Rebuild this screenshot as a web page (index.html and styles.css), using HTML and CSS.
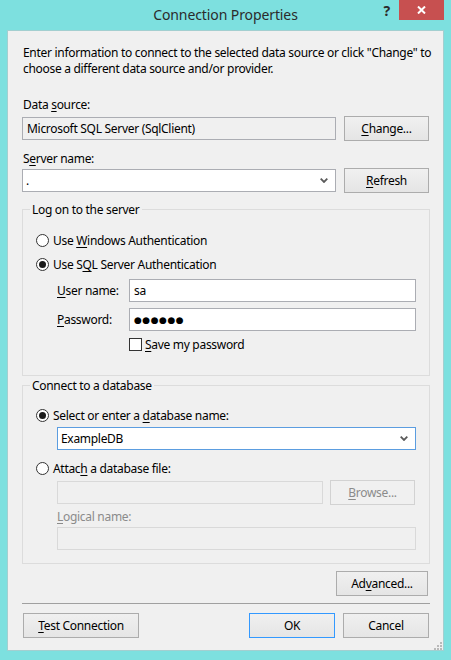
FILE: index.html
```html
<!DOCTYPE html>
<html>
<head>
<meta charset="utf-8">
<title>Connection Properties</title>
<link rel="stylesheet" href="styles.css">
</head>
<body>
<div class="window">
  <div class="titlebar">
    <div class="title">Connection Properties</div>
    <div class="controls">
      <span class="help">?</span>
      <span class="close"><svg width="9" height="8" viewBox="0 0 9 8"><path d="M1 0.5 L8 7.5 M8 0.5 L1 7.5" stroke="#fff" stroke-width="2" fill="none"/></svg></span>
    </div>
  </div>
  <div class="client">
    <p class="intro">Enter information to connect to the selected data source or click "Change" to<br>choose a different data source and/or provider.</p>

    <div class="label first">Data <u>s</u>ource:</div>
    <div class="row">
      <div class="field readonly">Microsoft SQL Server (SqlClient)</div>
      <button class="btn"><u>C</u>hange...</button>
    </div>

    <div class="label">S<u>e</u>rver name:</div>
    <div class="row row2">
      <div class="field combo"><span>.</span><svg class="chev" width="8" height="5" viewBox="0 0 8 5"><path d="M0.7 0.7 L4 4 L7.3 0.7" stroke="#5a5a5a" stroke-width="1.8" fill="none"/></svg></div>
      <button class="btn"><u>R</u>efresh</button>
    </div>

    <fieldset class="group group1">
      <legend>Log on to the server</legend>
      <div class="radio-row r1"><span class="radio"></span><span>Use <u>W</u>indows Authentication</span></div>
      <div class="radio-row r2"><span class="radio on"></span><span>Use S<u>Q</u>L Server Authentication</span></div>
      <div class="cred">
        <div class="clabel"><u>U</u>ser name:</div>
        <div class="field">sa</div>
        <div class="clabel"><u>P</u>assword:</div>
        <div class="field pw">●●●●●●</div>
        <div class="check-row"><span class="check"></span><span><u>S</u>ave my password</span></div>
      </div>
    </fieldset>

    <fieldset class="group group2">
      <legend>Connect to a database</legend>
      <div class="radio-row r3"><span class="radio on"></span><span>Select or enter a <u>d</u>atabase name:</span></div>
      <div class="field combo focus db"><span>ExampleDB</span><svg class="chev" width="8" height="5" viewBox="0 0 8 5"><path d="M0.7 0.7 L4 4 L7.3 0.7" stroke="#5a5a5a" stroke-width="1.8" fill="none"/></svg></div>
      <div class="radio-row r4"><span class="radio"></span><span>Attac<u>h</u> a database file:</span></div>
      <div class="attach">
        <div class="field disabled"></div>
        <button class="btn disabled-btn"><u>B</u>rowse...</button>
      </div>
      <div class="dlabel"><u>L</u>ogical name:</div>
      <div class="field disabled logical"></div>
    </fieldset>

    <div class="adv-row"><button class="btn adv">Ad<u>v</u>anced...</button></div>
    <div class="sep"></div>
    <div class="bottom">
      <button class="btn test"><u>T</u>est Connection</button>
      <div class="okcancel">
        <button class="btn ok">OK</button>
        <button class="btn">Cancel</button>
      </div>
    </div>
    <div class="grip-row">
      <svg width="8" height="8" viewBox="0 0 8 8" fill="#b9b9b9"><rect x="6" y="0" width="2" height="2"/><rect x="3" y="3" width="2" height="2"/><rect x="6" y="3" width="2" height="2"/><rect x="0" y="6" width="2" height="2"/><rect x="3" y="6" width="2" height="2"/><rect x="6" y="6" width="2" height="2"/></svg>
    </div>
  </div>
</div>
</body>
</html>
```
FILE: styles.css
```css
* { box-sizing: border-box; }
html, body { margin: 0; padding: 0; }
body {
  width: 451px;
  height: 660px;
  overflow: hidden;
  font-family: "Noto Sans", "DejaVu Sans", sans-serif;
  font-size: 12px;
  letter-spacing: -0.3px;
  color: #000;
}
u { text-decoration-thickness: 1px; text-underline-offset: 2px; }

.window {
  width: 451px;
  height: 660px;
  background: #7de0df;
}
.titlebar {
  display: grid;
  height: 30px;
}
.title, .controls { grid-area: 1 / 1; }
.title {
  text-align: center;
  font-size: 14px;
  letter-spacing: -0.1px;
  line-height: 30px;
  color: #2b2b2b;
}
.controls {
  justify-self: end;
  align-self: start;
  display: flex;
  align-items: flex-start;
  margin-right: 7px;
}
.help {
  font-weight: bold;
  font-size: 14px;
  line-height: 20px;
  color: #2b2b2b;
  margin-right: 9px;
  margin-top: 1px;
}
.close {
  width: 45px;
  height: 20px;
  background: #c75050;
  display: flex;
  align-items: center;
  justify-content: center;
}

.client {
  margin-left: 7px;
  width: 437px;
  height: 621px;
  background: #f0f0f0;
  border: 1px solid #a3cfd0;
  padding: 0 13px 0 14px;
  display: flex;
  flex-direction: column;
}
.intro {
  margin: 14px 0 0 1px;
  line-height: 16px;
  white-space: nowrap;
}
.label {
  line-height: 15px;
  margin: 10px 0 0 1px;
}
.label.first { margin-top: 20px; }
.row {
  display: grid;
  grid-template-columns: 1fr 85px;
  column-gap: 8px;
  align-items: center;
  margin: 4px 1px 0 0;
  height: 25px;
}
.row2 { margin-top: 2px; }

.field {
  height: 23px;
  border: 1px solid #abadb3;
  background: #fff;
  line-height: 21px;
  padding: 0 4px;
  white-space: nowrap;
  overflow: hidden;
}
.field.readonly { background: #f0f0f0; }
.field.combo {
  display: flex;
  align-items: center;
  justify-content: space-between;
  padding: 0 7px 0 3px;
}
.field.combo.focus { border-color: #5b9de0; }
.field.pw { font-size: 9px; letter-spacing: 0.5px; }
.field.disabled { background: #f0f0f0; border-color: #d9d9d9; }

.btn {
  height: 25px;
  border: 1px solid #acacac;
  background: linear-gradient(#f0f0f0, #e5e5e5);
  font-family: inherit;
  font-size: 12px;
  letter-spacing: inherit;
  color: #000;
  padding: 0;
  line-height: 21px;
}
.btn.ok { border-color: #3399ff; }
.btn.disabled-btn { color: #8b8b8b; border-color: #d2d2d2; background: #f0f0f0; }

.group {
  margin: 9px 0 0 0;
  width: 408px;
  border: 1px solid #dcdcdc;
  padding: 0 13px 0 13px;
  min-width: 0;
}
.group legend {
  padding: 0 2px;
  margin-left: -6px;
  line-height: 15px;
}
.group1 { padding-bottom: 23px; }
.group2 { margin-top: 2px; padding-bottom: 13px; }

.radio-row {
  display: flex;
  align-items: center;
  gap: 4px;
  line-height: 15px;
  height: 15px;
}
.r1 { margin-top: 16px; }
.r2 { margin-top: 9px; }
.r3 { margin-top: 15px; }
.r4 { margin-top: 11px; }
.radio {
  width: 13px;
  height: 13px;
  border: 1px solid #333;
  border-radius: 50%;
  background: #fff;
  display: flex;
  align-items: center;
  justify-content: center;
  flex: none;
}
.radio.on::after {
  content: "";
  width: 7px;
  height: 7px;
  border-radius: 50%;
  background: #1a1a1a;
}

.cred {
  display: grid;
  grid-template-columns: 72px 1fr;
  row-gap: 6px;
  align-items: center;
  margin: 7px 0 0 21px;
}
.clabel { line-height: 15px; }
.check-row {
  grid-column: 2;
  display: flex;
  align-items: center;
  gap: 3px;
  height: 15px;
  line-height: 15px;
}
.check {
  width: 13px;
  height: 13px;
  border: 1px solid #333;
  background: #fff;
  flex: none;
}

.db { margin: 4px 0 0 21px; }
.attach {
  display: grid;
  grid-template-columns: 1fr 85px;
  column-gap: 7px;
  align-items: center;
  height: 25px;
  margin: 4px 1px 0 21px;
}
.dlabel {
  color: #8b8b8b;
  line-height: 15px;
  margin: 4px 0 0 21px;
}
.logical { margin: 3px 0 0 21px; }

.adv-row {
  display: flex;
  justify-content: flex-end;
  margin: 7px 2px 0 0;
}
.btn.adv { width: 92px; }
.sep {
  height: 1px;
  background: #a0a0a0;
  margin-top: 7px;
}
.bottom {
  display: flex;
  justify-content: space-between;
  margin: 9px 1px 0 1px;
}
.btn.test { width: 116px; }
.okcancel { display: flex; gap: 8px; }
.okcancel .btn { width: 86px; }
.grip-row {
  display: flex;
  justify-content: flex-end;
  margin: 4px -12px 0 0;
}
```
